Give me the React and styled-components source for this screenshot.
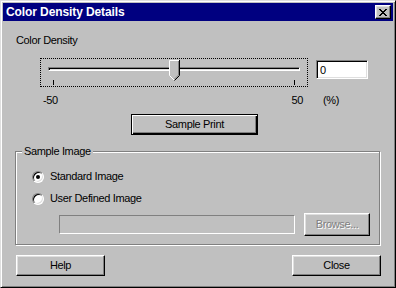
import React from 'react';
import styled, { createGlobalStyle } from 'styled-components';

const MIN = -50;
const MAX = 50;
const TRACK_W = 252;
const THUMB_W = 11;

const GlobalStyle = createGlobalStyle`
    html, body {
        margin: 0;
        padding: 0;
        background: #c0c0c0;
    }
    body {
        font-family: "Liberation Sans", Arial, sans-serif;
        font-size: 11px;
        letter-spacing: -0.35px;
        line-height: 15px;
        color: #000;
    }
`;

const Window = styled.div`
    box-sizing: border-box;
    width: 396px;
    height: 288px;
    padding: 2px;
    background: #c0c0c0;
    border: 1px solid;
    border-color: #dfdfdf #000 #000 #dfdfdf;
    box-shadow: inset 1px 1px #fff, inset -1px -1px #808080;
    display: flex;
    flex-direction: column;
`;

const TitleBar = styled.div`
    height: 18px;
    flex-shrink: 0;
    background: #000080;
    display: flex;
    align-items: center;
    justify-content: space-between;
    padding: 0 2px 0 3px;
`;

const Title = styled.span`
    color: #fff;
    font-weight: bold;
    font-size: 12px;
    letter-spacing: -0.1px;
`;

const CloseBox = styled.div`
    box-sizing: border-box;
    width: 16px;
    height: 14px;
    background: #c0c0c0;
    border: 1px solid;
    border-color: #fff #000 #000 #fff;
    box-shadow: inset -1px -1px #808080, inset 1px 1px #dfdfdf;
    display: flex;
    align-items: center;
    justify-content: center;
`;

const Body = styled.div`
    flex: 1;
    display: flex;
    flex-direction: column;
    align-items: flex-start;
    padding: 0 12px;
`;

const Label = styled.div`
    margin: 12px 0 0 1px;
`;

const SliderRow = styled.div`
    display: flex;
    align-items: flex-start;
    margin-top: 10px;
    padding-left: 25px;
`;

const SliderBox = styled.div`
    box-sizing: border-box;
    width: 268px;
    height: 29px;
    border: 1px dotted #000;
    padding: 8px 7px 1px;
    display: flex;
    flex-direction: column;
`;

const Track = styled.div`
    position: relative;
    box-sizing: border-box;
    width: ${TRACK_W}px;
    height: 4px;
    background: #dfdfdf;
    border: 1px solid;
    border-color: #808080 #fff #fff #808080;
    box-shadow: inset 1px 1px #000;
`;

const Thumb = styled.svg`
    position: absolute;
    top: -8px;
    display: block;
`;

const Ticks = styled.div`
    display: flex;
    justify-content: space-between;
    padding: 0 5px;
    margin-top: 9px;
`;

const Tick = styled.span`
    width: 1px;
    height: 5px;
    background: #000;
`;

const ValueInput = styled.input`
    box-sizing: border-box;
    width: 52px;
    height: 19px;
    margin: 2px 0 0 8px;
    padding: 0 3px;
    font: inherit;
    letter-spacing: inherit;
    background: #fff;
    border: 1px solid;
    border-color: #808080 #fff #fff #808080;
    box-shadow: inset 1px 1px #000, inset -1px -1px #dfdfdf;
    outline: none;
`;

const ScaleRow = styled.div`
    display: flex;
    margin-top: 6px;
    padding-left: 28px;
`;

const ScaleEnds = styled.div`
    width: 260px;
    display: flex;
    justify-content: space-between;
`;

const Unit = styled.span`
    margin-left: 20px;
`;

const Button = styled.button`
    box-sizing: border-box;
    width: ${p => p.$w}px;
    height: ${p => p.$h || 21}px;
    padding: 0;
    font: inherit;
    letter-spacing: inherit;
    color: #000;
    background: #c0c0c0;
    border: 1px solid;
    border-color: #fff #000 #000 #fff;
    box-shadow: inset -1px -1px #808080, inset 1px 1px #dfdfdf;

    &:disabled {
        color: #808080;
        text-shadow: 1px 1px #fff;
    }
`;

const DefaultButton = styled(Button)`
    margin: 6px 0 0 116px;
    border-color: #000;
    box-shadow: inset 1px 1px #fff, inset -1px -1px #000, inset -2px -2px #808080;
`;

const Group = styled.div`
    position: relative;
    box-sizing: border-box;
    width: 365px;
    height: 94px;
    margin-top: 16px;
    padding: 17px 0 0 16px;
    border: 1px solid #808080;
    box-shadow: inset 1px 1px #fff, 1px 1px #fff;
`;

const Legend = styled.span`
    position: absolute;
    top: -8px;
    left: 6px;
    padding: 0 2px;
    background: #c0c0c0;
`;

const RadioList = styled.div`
    display: flex;
    flex-direction: column;
    gap: 7px;
`;

const RadioRow = styled.label`
    display: flex;
    align-items: center;
    gap: 6px;
    height: 15px;
`;

const Radio = styled.span`
    box-sizing: border-box;
    width: 12px;
    height: 12px;
    border-radius: 50%;
    background: #fff;
    border: 1px solid;
    border-color: #808080 #fff #fff #808080;
    box-shadow: inset 1px 1px #000, inset -1px -1px #dfdfdf;
    display: flex;
    align-items: center;
    justify-content: center;

    &::after {
        content: '';
        width: 4px;
        height: 4px;
        border-radius: 50%;
        background: ${p => (p.$checked ? '#000' : 'transparent')};
    }
`;

const PathRow = styled.div`
    display: flex;
    align-items: center;
    margin: 7px 0 0 27px;
`;

const PathField = styled.div`
    box-sizing: border-box;
    width: 236px;
    height: 19px;
    margin-right: 9px;
    border: 1px solid;
    border-color: #808080 #fff #fff #808080;
`;

const Footer = styled.div`
    align-self: stretch;
    display: flex;
    justify-content: space-between;
    margin-top: 10px;
    padding-left: 1px;
`;

function CloseGlyph() {
    const rows = [
        [0, 1, 6, 7],
        [1, 2, 5, 6],
        [2, 3, 4, 5],
        [3, 4],
        [2, 3, 4, 5],
        [1, 2, 5, 6],
        [0, 1, 6, 7],
    ];
    return (
        <svg width="8" height="7" viewBox="0 0 8 7" shapeRendering="crispEdges">
            {rows.map((cols, y) =>
                cols.map(x => <rect key={`${x}-${y}`} x={x} y={y} width="1" height="1" fill="#000" />)
            )}
        </svg>
    );
}

function SliderThumb({ left }) {
    return (
        <Thumb width="11" height="21" viewBox="0 0 11 21" style={{ left }}>
            <polygon points="0,0 11,0 11,15 5.5,20.5 0,15" fill="#c0c0c0" />
            <polyline points="5,20 0.5,15.5 0.5,0.5 10,0.5" fill="none" stroke="#fff" />
            <polyline points="9.5,1 9.5,15 5.5,19" fill="none" stroke="#808080" />
            <polyline points="10.5,0 10.5,15.5 5.5,20.5" fill="none" stroke="#000" />
        </Thumb>
    );
}

export default function App() {
    const value = 0;
    const thumbLeft = Math.round(((value - MIN) / (MAX - MIN)) * (TRACK_W - THUMB_W)) - 1;

    return (
        <>
            <GlobalStyle />
            <Window>
                <TitleBar>
                    <Title>Color Density Details</Title>
                    <CloseBox>
                        <CloseGlyph />
                    </CloseBox>
                </TitleBar>

                <Body>
                    <Label>Color Density</Label>

                    <SliderRow>
                        <SliderBox>
                            <Track>
                                <SliderThumb left={thumbLeft} />
                            </Track>
                            <Ticks>
                                <Tick />
                                <Tick />
                            </Ticks>
                        </SliderBox>
                        <ValueInput defaultValue={value} />
                    </SliderRow>

                    <ScaleRow>
                        <ScaleEnds>
                            <span>{MIN}</span>
                            <span>{MAX}</span>
                        </ScaleEnds>
                        <Unit>(%)</Unit>
                    </ScaleRow>

                    <DefaultButton $w={127}>Sample Print</DefaultButton>

                    <Group>
                        <Legend>Sample Image</Legend>
                        <RadioList>
                            <RadioRow>
                                <Radio $checked />
                                Standard Image
                            </RadioRow>
                            <RadioRow>
                                <Radio />
                                User Defined Image
                            </RadioRow>
                        </RadioList>
                        <PathRow>
                            <PathField />
                            <Button $w={66} $h={23} disabled>Browse...</Button>
                        </PathRow>
                    </Group>

                    <Footer>
                        <Button $w={89}>Help</Button>
                        <Button $w={89}>Close</Button>
                    </Footer>
                </Body>
            </Window>
        </>
    );
}
